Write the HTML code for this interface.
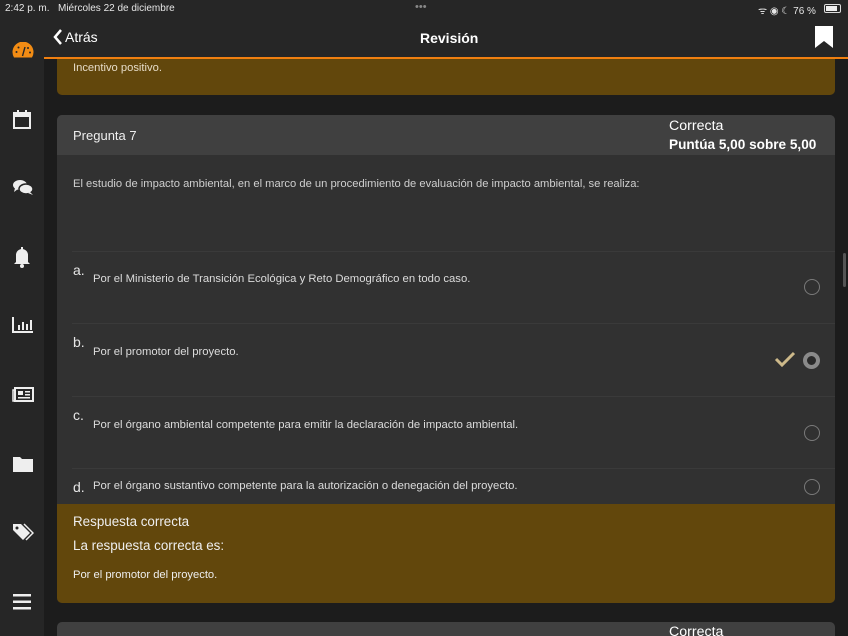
<!DOCTYPE html>
<html><head><meta charset="utf-8"><style>
*{margin:0;padding:0;box-sizing:border-box}
html,body{width:848px;height:636px;overflow:hidden}
body{background:#1c1c1c;font-family:"Liberation Sans",sans-serif;color:#ddd;position:relative}
.abs{position:absolute}
.side{left:0;top:0;width:44px;height:636px;background:#262626}
.status{left:0;top:0;width:848px;height:18px;background:#262626;font-size:10px;color:#e6e6e6}
.nav{left:44px;top:18px;width:804px;height:40px;background:#262626}
.orange{left:44px;top:57px;width:804px;height:2px;background:#f07f10}
.brown{background:#62470c}
.t{position:absolute;white-space:nowrap}
.line{position:absolute;left:72px;width:763px;height:1px;background:#3a3a3a}
.radio{position:absolute;left:804px;width:16px;height:16px;border:1.5px solid #7a7a7a;border-radius:50%}
.icon{position:absolute;left:12px;z-index:5}
.opt{font-size:11.3px;color:#dcdcdc}
.let{font-size:14px;color:#e6e6e6}
</style></head><body>
<div class="abs side"></div>
<div class="abs status">
 <span class="t" style="left:5px;top:3px">2:42 p. m.</span>
 <span class="t" style="left:58px;top:3px">Miércoles 22 de diciembre</span>
 <span class="t" style="left:415px;top:1px;color:#888;font-size:11px">•••</span>
 <span class="t" style="left:758px;top:3px">ᯤ ◉ ☾ 76 %</span>
 <div class="abs" style="left:824px;top:4px;width:17px;height:9px;border:1px solid #ddd;border-radius:2px"><div style="width:11px;height:5px;margin:1px;background:#eee"></div></div>
</div>
<div class="abs nav">
 <svg class="abs" style="left:8px;top:10px" width="12" height="18"><path d="M9 2 L3 9 L9 16" stroke="#fff" stroke-width="2.5" fill="none"/></svg>
 <span class="t" style="left:21px;top:11px;font-size:14px;color:#fff">Atrás</span>
 <span class="t" style="left:376px;top:12px;font-size:14px;color:#fff;font-weight:bold">Revisión</span>
 <svg class="abs" style="left:771px;top:8px" width="18" height="23"><path d="M0 0H18V22L9 15L0 22Z" fill="#fff"/></svg>
</div>
<div class="abs orange"></div>
<svg class="icon" style="top:42px;left:12px" width="22" height="16" viewBox="0 0 22 16"><path d="M2 15.5A10.5 10.5 0 1 1 20 15.5Z" fill="#f28c14"/><path d="M10.5 14L13 5" stroke="#262626" stroke-width="1.4"/><circle cx="4.5" cy="10" r="1" fill="#262626"/><circle cx="6.5" cy="5.5" r="1" fill="#262626"/><circle cx="16" cy="6" r="1" fill="#262626"/><circle cx="18" cy="10.5" r="1" fill="#262626"/></svg>
<svg class="icon" style="top:109px" width="20" height="20"><rect x="2" y="4" width="16" height="15" fill="none" stroke="#eee" stroke-width="2"/><rect x="2" y="4" width="16" height="4" fill="#eee"/><rect x="5" y="1" width="2" height="4" fill="#eee"/><rect x="13" y="1" width="2" height="4" fill="#eee"/></svg>
<svg class="icon" style="top:178px" width="22" height="18"><ellipse cx="8" cy="7" rx="7" ry="5" fill="#eee"/><ellipse cx="14" cy="11" rx="7" ry="5" fill="#eee" stroke="#262626" stroke-width="1.5"/><path d="M3 10L2 14L6 11Z" fill="#eee"/><path d="M18 14L21 17L16 15Z" fill="#eee"/></svg>
<svg class="icon" style="top:246px" width="20" height="22"><path d="M4 16V9A6 6 0 0 1 16 9V16L18 18H2Z" fill="#eee"/><circle cx="10" cy="20" r="2" fill="#eee"/><rect x="9" y="1" width="2" height="3" fill="#eee"/></svg>
<svg class="icon" style="top:316px" width="22" height="18"><path d="M1 1V16H21" stroke="#eee" stroke-width="2" fill="none"/><rect x="6" y="9" width="2" height="5" fill="#eee"/><rect x="10" y="6" width="2" height="8" fill="#eee"/><rect x="14" y="8" width="2" height="6" fill="#eee"/><rect x="18" y="4" width="2" height="10" fill="#eee"/></svg>
<svg class="icon" style="top:387px" width="22" height="16"><rect x="3" y="1" width="18" height="13" fill="none" stroke="#eee" stroke-width="2"/><path d="M3 3H1V14H3" stroke="#eee" stroke-width="1.5" fill="none"/><rect x="6" y="4" width="5" height="4" fill="#eee"/><rect x="13" y="4" width="5" height="1.5" fill="#eee"/><rect x="13" y="7" width="5" height="1.5" fill="#eee"/><rect x="6" y="10" width="12" height="1.5" fill="#eee"/></svg>
<svg class="icon" style="top:455px" width="22" height="18"><path d="M1 2H8L10 4H21V17H1Z" fill="#eee"/></svg>
<svg class="icon" style="top:522px" width="22" height="20"><path d="M1 2H9L18 11L11 18L1 8Z" fill="#eee"/><circle cx="5" cy="6" r="1.5" fill="#262626"/><path d="M12 2L21 11L14 18" stroke="#eee" stroke-width="1.5" fill="none"/></svg>
<svg class="icon" style="top:593px" width="20" height="18"><rect x="1" y="1" width="18" height="2.5" fill="#eee"/><rect x="1" y="7.5" width="18" height="2.5" fill="#eee"/><rect x="1" y="14" width="18" height="2.5" fill="#eee"/></svg>
<div class="abs brown" style="left:57px;top:59px;width:778px;height:36px;border-radius:0 0 5px 5px"></div>
<span class="t" style="left:73px;top:62px;font-size:11.2px;color:#e6dcc8">Incentivo positivo.</span>
<div class="abs" style="left:57px;top:115px;width:778px;height:488px;background:#313131;border-radius:5px;overflow:hidden">
 <div style="height:40px;background:#404040"></div>
 <div class="abs brown" style="left:0;top:389px;width:778px;height:99px"></div>
</div>
<span class="t" style="left:73px;top:128px;font-size:13px;color:#eee">Pregunta 7</span>
<span class="t" style="left:669px;top:118px;font-size:14.2px;color:#fff">Correcta</span>
<span class="t" style="left:669px;top:137px;font-size:13.6px;color:#fff;font-weight:bold">Puntúa 5,00 sobre 5,00</span>
<span class="t" style="left:73px;top:178px;font-size:11.2px;color:#cfcfcf">El estudio de impacto ambiental, en el marco de un procedimiento de evaluación de impacto ambiental, se realiza:</span>
<div class="line" style="top:251px"></div>
<div class="line" style="top:323px"></div>
<div class="line" style="top:396px"></div>
<div class="line" style="top:468px"></div>
<span class="t let" style="left:73px;top:262px">a.</span>
<span class="t opt" style="left:93px;top:273px">Por el Ministerio de Transición Ecológica y Reto Demográfico en todo caso.</span>
<div class="radio" style="top:279px"></div>
<span class="t let" style="left:73px;top:334px">b.</span>
<span class="t opt" style="left:93px;top:346px">Por el promotor del proyecto.</span>
<svg class="abs" style="left:774px;top:351px" width="22" height="16"><path d="M2 8L8 14L20 2" stroke="#cdb98a" stroke-width="3" fill="none"/></svg>
<div class="abs" style="left:803px;top:352px;width:17px;height:17px;border-radius:50%;border:4px solid #8a8a8a;background:#2a2a2a"></div>
<span class="t let" style="left:73px;top:407px">c.</span>
<span class="t opt" style="left:93px;top:419px">Por el órgano ambiental competente para emitir la declaración de impacto ambiental.</span>
<div class="radio" style="top:425px"></div>
<span class="t let" style="left:73px;top:479px">d.</span>
<span class="t opt" style="left:93px;top:480px">Por el órgano sustantivo competente para la autorización o denegación del proyecto.</span>
<div class="radio" style="top:479px"></div>
<span class="t" style="left:73px;top:514px;font-size:13.4px;color:#eee">Respuesta correcta</span>
<span class="t" style="left:73px;top:538px;font-size:13.4px;color:#eee">La respuesta correcta es:</span>
<span class="t" style="left:73px;top:569px;font-size:11.2px;color:#eee">Por el promotor del proyecto.</span>
<div class="abs" style="left:57px;top:622px;width:778px;height:14px;background:#404040;border-radius:5px 5px 0 0"></div>
<span class="t" style="left:669px;top:624px;font-size:14.2px;color:#fff">Correcta</span>
<div class="abs" style="left:843px;top:253px;width:3px;height:34px;background:#555;border-radius:2px"></div>
</body></html>
